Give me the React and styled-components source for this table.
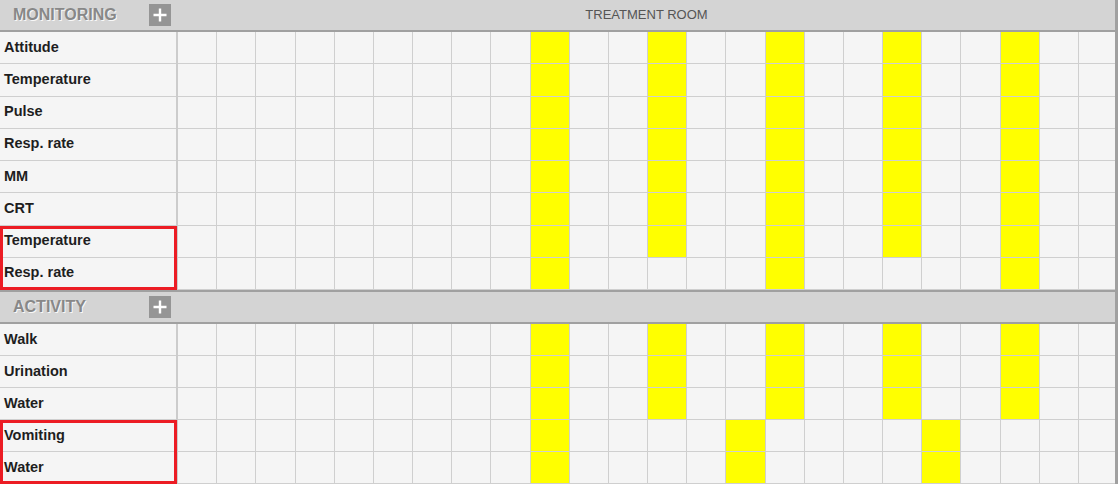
import React from "react";
import styled, { createGlobalStyle } from "styled-components";

const COLUMNS = 24;
const ALL = [9, 12, 15, 18, 21];

const sections = [
    {
        title: "MONITORING",
        location: "TREATMENT ROOM",
        rowHeight: 32.25,
        rows: [
            { label: "Attitude", marks: ALL },
            { label: "Temperature", marks: ALL },
            { label: "Pulse", marks: ALL },
            { label: "Resp. rate", marks: ALL },
            { label: "MM", marks: ALL },
            { label: "CRT", marks: ALL },
            { label: "Temperature", marks: ALL, flagged: true },
            { label: "Resp. rate", marks: [9, 15, 21], flagged: true },
        ],
    },
    {
        title: "ACTIVITY",
        rowHeight: 32,
        topBorder: true,
        rows: [
            { label: "Walk", marks: ALL },
            { label: "Urination", marks: ALL },
            { label: "Water", marks: ALL },
            { label: "Vomiting", marks: [9, 14, 19], flagged: true },
            { label: "Water", marks: [9, 14, 19], flagged: true },
        ],
    },
];

const GlobalStyle = createGlobalStyle`
    html, body {
        margin: 0;
        padding: 0;
        background: #f5f5f5;
        overflow: hidden;
    }
    body {
        font-family: "Liberation Sans", Arial, sans-serif;
    }
`;

const Page = styled.div`
    position: relative;
    width: 1118px;
    height: 484px;
    background: #f5f5f5;
    overflow: hidden;

    /* scroll track along the right edge */
    &::after {
        content: "";
        position: absolute;
        top: 0;
        right: 0;
        bottom: 0;
        width: 3px;
        background: #a0a0a0;
    }
`;

const SectionHeader = styled.div`
    display: grid;
    grid-template-columns: 178px 1fr;
    align-items: center;
    height: 30px;
    background: #d4d4d4;
    border-bottom: 2px solid #a0a0a0;
    ${p => p.$topBorder && "border-top: 2px solid #a0a0a0;"}
`;

const TitleCell = styled.div`
    display: flex;
    align-items: center;
    padding-left: 13px;
    height: 100%;
`;

const Title = styled.span`
    font-size: 16px;
    font-weight: bold;
    color: #888888;
    text-shadow: 1px 1px 0 rgba(255, 255, 255, 0.85);
    width: 136px;
    margin-top: -1px;
`;

const AddButton = styled.button`
    width: 22px;
    height: 22px;
    padding: 0;
    border: none;
    background: #959595;
    display: flex;
    align-items: center;
    justify-content: center;
    cursor: pointer;
    margin-top: -1px;
`;

const Location = styled.div`
    text-align: center;
    font-size: 13px;
    color: #555555;
    margin-top: -2px;
    padding-right: 3px;
`;

const Body = styled.div`
    display: flex;
`;

const LabelColumn = styled.div`
    width: 178px;
    flex-shrink: 0;
    box-sizing: border-box;
    border-right: 2px solid #cccccc;
    display: flex;
    flex-direction: column;
`;

const Flagged = styled.div`
    position: relative;
    display: flex;
    flex-direction: column;

    &::after {
        content: "";
        position: absolute;
        top: 0;
        left: 0;
        right: -1px;
        bottom: 0;
        border: 3px solid #ec1c24;
        pointer-events: none;
    }
`;

const Label = styled.div`
    height: ${p => p.$h}px;
    box-sizing: border-box;
    border-bottom: 1px solid #cfcfcf;
    display: flex;
    align-items: center;
    padding-left: 4px;
    padding-bottom: 2px;
    font-size: 14.5px;
    font-weight: bold;
    color: #1e1e1e;
    white-space: nowrap;
`;

const CellGrid = styled.div`
    flex: 1;
    display: grid;
    grid-template-columns: repeat(${COLUMNS}, 1fr);
    grid-auto-rows: ${p => p.$h}px;
`;

const Cell = styled.div`
    box-sizing: border-box;
    border-right: 1px solid #cfcfcf;
    border-bottom: 1px solid #cfcfcf;
    background: ${p => (p.$marked ? "#ffff00" : "#f5f5f5")};
`;

const PlusIcon = () => (
    <svg width="14" height="14" viewBox="0 0 14 14">
        <path d="M7 0.5V13.5M0.5 7H13.5" stroke="#ffffff" strokeWidth="2.4" />
    </svg>
);

const Section = ({ section }) => {
    const plain = section.rows.filter(r => !r.flagged);
    const flagged = section.rows.filter(r => r.flagged);

    return (
        <>
            <SectionHeader $topBorder={section.topBorder}>
                <TitleCell>
                    <Title>{section.title}</Title>
                    <AddButton aria-label={`Add ${section.title.toLowerCase()}`}>
                        <PlusIcon />
                    </AddButton>
                </TitleCell>
                <Location>{section.location}</Location>
            </SectionHeader>

            <Body>
                <LabelColumn>
                    {plain.map((row, i) => (
                        <Label key={i} $h={section.rowHeight}>{row.label}</Label>
                    ))}
                    {flagged.length > 0 && (
                        <Flagged>
                            {flagged.map((row, i) => (
                                <Label key={i} $h={section.rowHeight}>{row.label}</Label>
                            ))}
                        </Flagged>
                    )}
                </LabelColumn>

                <CellGrid $h={section.rowHeight}>
                    {section.rows.map((row, r) =>
                        Array.from({ length: COLUMNS }, (_, c) => (
                            <Cell key={`${r}-${c}`} $marked={row.marks.includes(c)} />
                        ))
                    )}
                </CellGrid>
            </Body>
        </>
    );
};

export default function App() {
    return (
        <>
            <GlobalStyle />
            <Page>
                {sections.map(s => (
                    <Section key={s.title} section={s} />
                ))}
            </Page>
        </>
    );
}
